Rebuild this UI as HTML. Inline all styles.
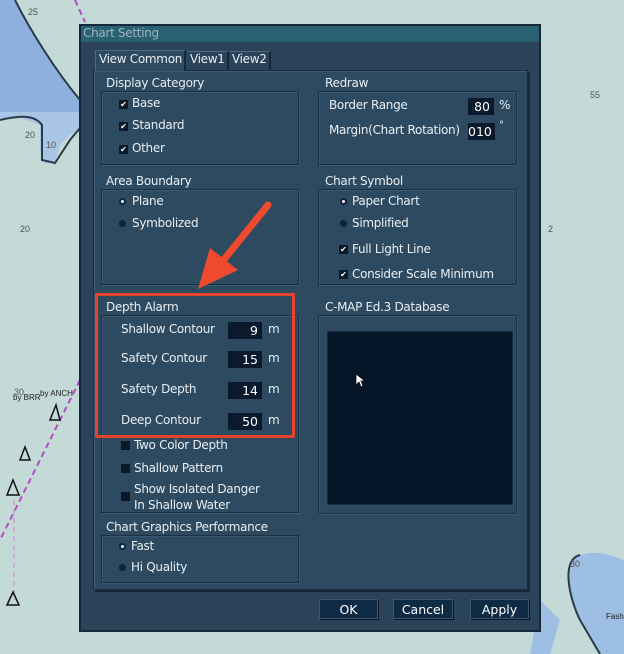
<!DOCTYPE html>
<html><head><meta charset="utf-8"><style>
*{margin:0;padding:0;box-sizing:border-box}
body{width:624px;height:654px;overflow:hidden;background:#c3dad7;font-family:"DejaVu Sans","Liberation Sans",sans-serif;color:#e8eef2;position:relative}
.a{position:absolute}
.t{position:absolute;font-size:12px;white-space:nowrap;letter-spacing:-0.3px}
.g{position:absolute;border:1px solid #1c3244;box-shadow:inset 1px 1px 0 #3b5870,1px 1px 0 #3b5870}
.cb{position:absolute;width:9px;height:9px;background:#0a1828}
.ck{color:#fff;font-size:8px;line-height:9px;text-align:center}
.rd{position:absolute;width:7px;height:7px;border-radius:50%;background:#0e2238}
.rd.on::after{content:"";position:absolute;left:2px;top:2px;width:3px;height:3px;background:#fff;border-radius:50%}
.in{position:absolute;background:#0a1a2c;color:#fff;font-size:12.5px;text-align:right;padding-right:4px;height:17px;line-height:17px}
.btn{position:absolute;background:#0f2a44;border:1px solid #3a5670;box-shadow:1px 1px 0 #0a1622;color:#fff;font-size:12.5px;text-align:center;height:20px;line-height:19px}
</style></head><body>
<svg class="a" style="left:0;top:0" width="624" height="654">
<path d="M0 0 L15 0 C30 30 55 70 80 100 L80 112 L0 112 Z" fill="#8db1dc"/>
<path d="M0 112 L80 112 L80 130 L70 135 L60 145 L55 162 L45 164 L40 150 L40 125 L20 118 L0 120 Z" fill="#a9c6e6"/>
<path d="M15 0 C30 30 55 70 80 100" stroke="#2b3a4a" stroke-width="2" fill="none"/>
<path d="M0 120 C20 115 35 115 42 125 L42 160 L55 163 L70 140 L80 128" stroke="#2b3a4a" stroke-width="2" fill="none"/>
<path d="M580 555 C560 560 570 600 580 620 L600 654 L624 654 L624 560 C610 555 600 550 580 555Z" fill="#9ebfe4"/>
<path d="M540 600 L560 620 L550 654 L530 654Z" fill="#9ebfe4"/>
<path d="M580 555 C560 560 570 600 580 620 L600 654" stroke="#2b3a4a" stroke-width="2" fill="none"/>
<path d="M75 0 L85 22" stroke="#b44cc4" stroke-width="2" stroke-dasharray="6 4"/>
<path d="M80 380 L0 540" stroke="#b44cc4" stroke-width="2" stroke-dasharray="6 4"/>
<path d="M14 500 L14 600" stroke="#c8a0d4" stroke-width="1.5" stroke-dasharray="5 4"/>
<g stroke="#111" stroke-width="1.5" fill="none"><path d="M50 420 L56 405 L60 420Z"/><path d="M20 460 L25 447 L30 460Z"/><path d="M7 495 L13 480 L19 495Z"/><path d="M7 605 L13 592 L19 605Z"/></g>
<g font-size="9" fill="#555" font-family="Liberation Sans"><text x="28" y="15">25</text><text x="590" y="98">55</text><text x="25" y="138">20</text><text x="46" y="148">10</text><text x="14" y="395">30</text><text x="13" y="400" font-size="8" fill="#222">by BRR</text><text x="40" y="396" font-size="8" fill="#222">by ANCH</text><text x="548" y="232">2</text><text x="20" y="232">20</text><text x="570" y="567">30</text><text x="606" y="619" font-size="8" fill="#222">Fash</text></g>
</svg>
<div class="a" style="left:79px;top:24px;width:462px;height:608px;background:#2a4359;border:2px solid #16293a"></div>
<div class="a" style="left:81px;top:26px;width:458px;height:16px;background:#2a6172"></div>
<div class="t" style="left:83px;top:26px;color:#9cb4c4;font-size:12px">Chart Setting</div>
<div class="a" style="left:93px;top:70px;width:435px;height:520px;background:#2d4a60;border:1px solid #1a2e40;box-shadow:inset 1px 1px 0 #3c5a72,2px 2px 0 #17283a"></div>
<div class="a" style="left:95px;top:50px;width:91px;height:21px;background:#2d4a60;border-top:1px solid #4b6a82;border-left:1px solid #4b6a82;border-right:2px solid #15283a"></div>
<div class="t" style="left:99px;top:52px">View Common</div>
<div class="a" style="left:187px;top:51px;width:42px;height:19px;background:#2a4359;border-right:2px solid #15283a;border-top:1px solid #4b6a82"></div>
<div class="t" style="left:190px;top:52px">View1</div>
<div class="a" style="left:230px;top:51px;width:41px;height:19px;background:#2a4359;border-right:2px solid #15283a;border-top:1px solid #4b6a82"></div>
<div class="t" style="left:232px;top:52px">View2</div>

<div class="g" style="left:101px;top:91px;width:198px;height:74px"></div>
<div class="t" style="left:104px;top:76px;background:#2d4a60;padding:0 2px">Display Category</div>
<div class="cb ck" style="left:119px;top:100px">✔</div><div class="t" style="left:132px;top:96px">Base</div>
<div class="cb ck" style="left:119px;top:122px">✔</div><div class="t" style="left:132px;top:118px">Standard</div>
<div class="cb ck" style="left:119px;top:145px">✔</div><div class="t" style="left:132px;top:141px">Other</div>

<div class="g" style="left:318px;top:91px;width:199px;height:74px"></div>
<div class="t" style="left:323px;top:76px;background:#2d4a60;padding:0 2px">Redraw</div>
<div class="t" style="left:329px;top:98px">Border Range</div>
<div class="in" style="left:468px;top:98px;width:26px">80</div><div class="t" style="left:499px;top:98px">%</div>
<div class="t" style="left:329px;top:123px">Margin(Chart Rotation)</div>
<div class="in" style="left:468px;top:123px;width:27px">010</div><div class="t" style="left:499px;top:120px;font-size:10px">°</div>

<div class="g" style="left:101px;top:189px;width:198px;height:96px"></div>
<div class="t" style="left:104px;top:174px;background:#2d4a60;padding:0 2px">Area Boundary</div>
<div class="rd on" style="left:119px;top:198px"></div><div class="t" style="left:132px;top:194px">Plane</div>
<div class="rd" style="left:119px;top:220px"></div><div class="t" style="left:132px;top:216px">Symbolized</div>

<div class="g" style="left:318px;top:189px;width:199px;height:96px"></div>
<div class="t" style="left:323px;top:174px;background:#2d4a60;padding:0 2px">Chart Symbol</div>
<div class="rd on" style="left:340px;top:198px"></div><div class="t" style="left:352px;top:194px">Paper Chart</div>
<div class="rd" style="left:340px;top:220px"></div><div class="t" style="left:352px;top:216px">Simplified</div>
<div class="cb ck" style="left:339px;top:245px">✔</div><div class="t" style="left:352px;top:242px">Full Light Line</div>
<div class="cb ck" style="left:339px;top:270px">✔</div><div class="t" style="left:352px;top:267px">Consider Scale Minimum</div>

<div class="g" style="left:101px;top:315px;width:198px;height:198px"></div>
<div class="t" style="left:104px;top:300px;background:#2d4a60;padding:0 2px">Depth Alarm</div>
<div class="t" style="left:121px;top:322px">Shallow Contour</div><div class="in" style="left:228px;top:322px;width:34px">9</div><div class="t" style="left:268px;top:322px">m</div>
<div class="t" style="left:121px;top:351px">Safety Contour</div><div class="in" style="left:228px;top:351px;width:34px">15</div><div class="t" style="left:268px;top:351px">m</div>
<div class="t" style="left:121px;top:382px">Safety Depth</div><div class="in" style="left:228px;top:382px;width:34px">14</div><div class="t" style="left:268px;top:382px">m</div>
<div class="t" style="left:121px;top:413px">Deep Contour</div><div class="in" style="left:228px;top:413px;width:34px">50</div><div class="t" style="left:268px;top:413px">m</div>
<div class="cb" style="left:121px;top:441px"></div><div class="t" style="left:134px;top:438px">Two Color Depth</div>
<div class="cb" style="left:121px;top:464px"></div><div class="t" style="left:134px;top:461px">Shallow Pattern</div>
<div class="cb" style="left:121px;top:492px"></div><div class="t" style="left:134px;top:482px">Show Isolated Danger</div><div class="t" style="left:134px;top:498px">In Shallow Water</div>

<div class="g" style="left:318px;top:315px;width:199px;height:199px"></div>
<div class="t" style="left:323px;top:300px;background:#2d4a60;padding:0 2px">C-MAP Ed.3 Database</div>
<div class="a" style="left:327px;top:331px;width:186px;height:174px;background:#051628;border:1px solid #1a2e40"></div>
<svg class="a" style="left:355px;top:373px" width="10" height="16"><path d="M1 1 L1 12 L4 9 L6 14 L8 13 L6 8 L10 8Z" fill="#fff" stroke="#000" stroke-width="0.7"/></svg>

<div class="g" style="left:101px;top:535px;width:198px;height:48px"></div>
<div class="t" style="left:104px;top:520px;background:#2d4a60;padding:0 2px">Chart Graphics Performance</div>
<div class="rd on" style="left:119px;top:543px"></div><div class="t" style="left:131px;top:539px">Fast</div>
<div class="rd" style="left:119px;top:564px"></div><div class="t" style="left:131px;top:560px">Hi Quality</div>

<div class="btn" style="left:319px;top:599px;width:59px">OK</div>
<div class="btn" style="left:393px;top:599px;width:60px">Cancel</div>
<div class="btn" style="left:470px;top:599px;width:59px">Apply</div>

<div class="a" style="left:95px;top:293px;width:200px;height:145px;border:3px solid #e5432c;border-radius:2px"></div>
<svg class="a" style="left:0;top:0" width="624" height="654"><path d="M268 205 L222 262" stroke="#ef4a2e" stroke-width="7" stroke-linecap="round"/><path d="M198 289 L210 248 L238 270Z" fill="#ef4a2e"/></svg>
</body></html>
